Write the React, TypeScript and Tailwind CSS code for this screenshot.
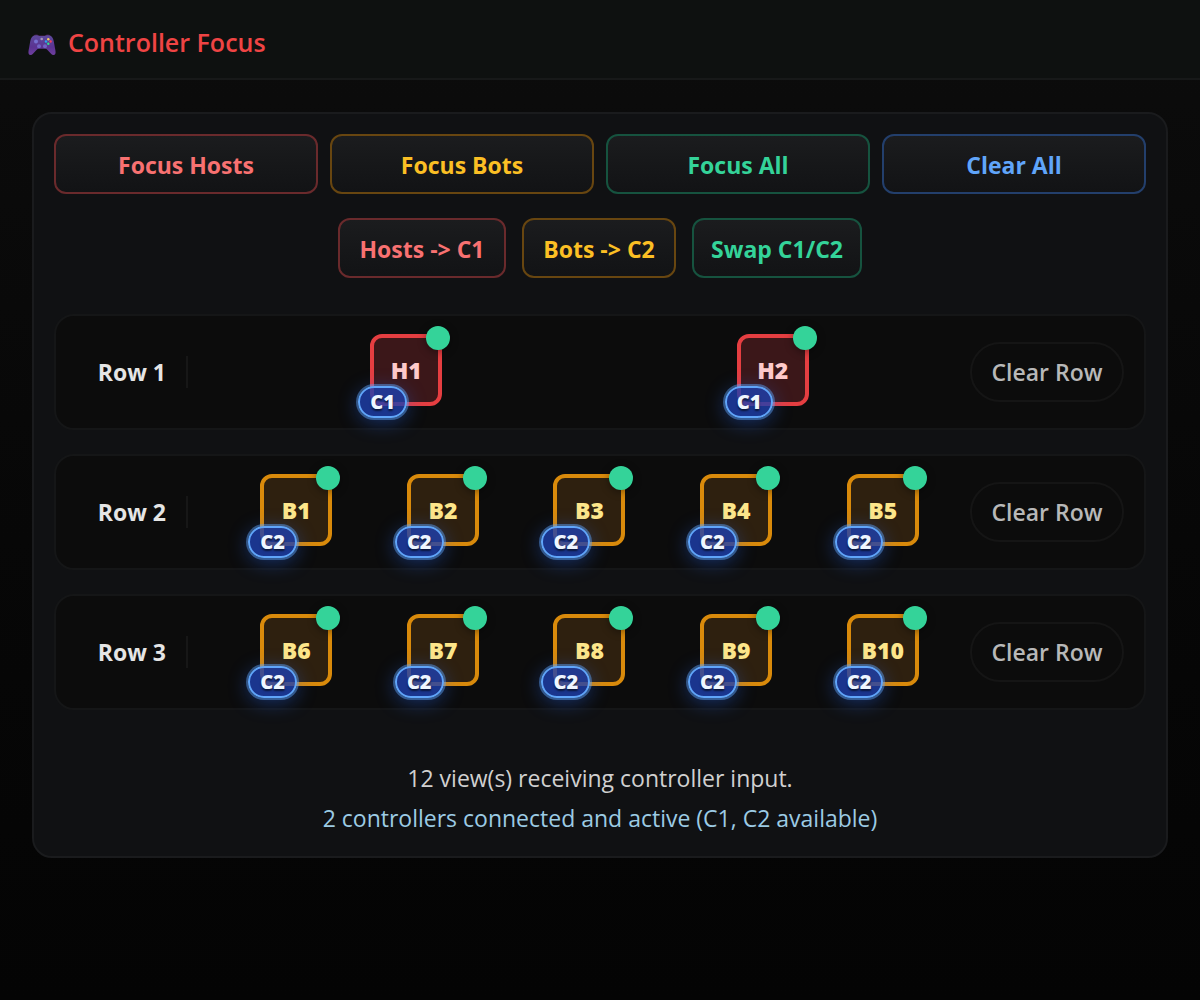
import { clsx } from "clsx";

type Tone = "red" | "amber" | "green" | "blue";

const toneClasses: Record<Tone, string> = {
  red: "border-[#6a2a2c] text-[#f87171]",
  amber: "border-[#684610] text-[#fbbf24]",
  green: "border-[#16533f] text-[#34d399]",
  blue: "border-[#233f6c] text-[#60a5fa]",
};

function ActionButton({ label, tone, className }: { label: string; tone: Tone; className?: string }) {
  return (
    <button
      type="button"
      className={clsx(
        "h-15 rounded-xl border-2 bg-linear-to-b from-[#1b1c1e] to-[#121315] pt-0.5 text-[23px] leading-8 font-bold whitespace-nowrap",
        toneClasses[tone],
        className,
      )}
    >
      {label}
    </button>
  );
}

function ViewTile({ name, controller, host }: { name: string; controller: string; host: boolean }) {
  return (
    <button
      type="button"
      className={clsx(
        "relative size-18 rounded-xl border-4 text-[23px] leading-8 font-extrabold",
        host
          ? "border-[#e53e41] bg-[#3b1719] text-[#fecaca]"
          : "border-[#d98a0b] bg-[#2e200f] text-[#fde68a]",
      )}
    >
      {name}
      <span className="absolute -top-3 -right-3 size-6 rounded-full bg-[#34d399] shadow-[0_2px_8px_rgba(0,0,0,0.4)]" />
      <span className="absolute -bottom-4 -left-4 flex h-8 items-center rounded-full border-2 border-[#60a5fa] bg-[#1e40af]/80 px-[10px] text-[20px] leading-6 font-extrabold text-[#eff6ff] shadow-[0_0_0_2px_rgba(96,165,250,0.45),0_4px_20px_rgba(37,99,235,0.45)] [text-shadow:0_2px_2px_rgba(0,0,0,0.6)]">
        {controller}
      </span>
    </button>
  );
}

function GamepadIcon() {
  return (
    <svg viewBox="0 0 28 22" className="h-[22px] w-7" aria-hidden="true">
      <defs>
        <linearGradient id="pad" x1="0" y1="0" x2="0" y2="1">
          <stop offset="0" stopColor="#5d4a9c" />
          <stop offset="0.6" stopColor="#5b3392" />
          <stop offset="1" stopColor="#6f3f9f" />
        </linearGradient>
      </defs>
      <path d="M5 2.400Q5.600.6 8 .6q2.200 0 3 .8h6Q18 .6 20 .6q2.400 0 3 1.800Z" fill="#46204f" />
      <path
        d="M5.200 2Q6.500 1.300 8.500 1.300q1.500 0 2.500.7h6q1-.7 2.500-.7 2 0 3.300.7Q25 3.200 25.800 7.500L27.500 17q.5 4-2 4-1.400 0-2.700-1.500L19.500 16q-1-1.200-2.500-1.200h-6q-1.500 0-2.500 1.200l-3.300 3.500Q3.900 21 2.500 21 0 21 .5 17L2.200 7.500Q3 3.200 5.200 2Z"
        fill="url(#pad)"
      />
      <circle cx="8" cy="7.500" r="2" fill="#7670d0" />
      <circle cx="11" cy="12.300" r="2" fill="#7164c5" />
      <circle cx="17" cy="12.300" r="2" fill="#7164c5" />
      <circle cx="13.700" cy="5" r="1.300" fill="#a596b6" />
      <circle cx="20.300" cy="5.300" r="1.200" fill="#f5cf63" />
      <circle cx="22.600" cy="7.500" r="1.200" fill="#f2435d" />
      <circle cx="18" cy="7.500" r="1.200" fill="#27a9ee" />
      <circle cx="20.300" cy="9.700" r="1.200" fill="#2fe08c" />
    </svg>
  );
}

const rows = [
  { label: "Row 1", host: true, controller: "C1", views: ["H1", "H2"] },
  { label: "Row 2", host: false, controller: "C2", views: ["B1", "B2", "B3", "B4", "B5"] },
  { label: "Row 3", host: false, controller: "C2", views: ["B6", "B7", "B8", "B9", "B10"] },
];

export default function App() {
  return (
    <div className="min-h-screen bg-linear-to-b from-[#0c0c0c] to-[#040404] font-['Open_Sans','Noto_Sans',sans-serif]">
      <header className="flex items-end gap-3 border-b-2 border-[#171919] bg-[#0e1110] px-7 pt-6 pb-[18px]">
        <div className="pb-1">
          <GamepadIcon />
        </div>
        <h1 className="text-[25px] leading-9 font-semibold text-[#ef4444]">Controller Focus</h1>
      </header>

      <main className="p-8">
        <section className="rounded-[20px] border-2 border-[#1a1b1d] bg-[#101113] p-5 pb-[18px]">
          <div className="grid grid-cols-4 gap-3">
            <ActionButton label="Focus Hosts" tone="red" />
            <ActionButton label="Focus Bots" tone="amber" />
            <ActionButton label="Focus All" tone="green" />
            <ActionButton label="Clear All" tone="blue" />
          </div>

          <div className="mt-6 flex justify-center gap-4">
            <ActionButton label="Hosts -> C1" tone="red" className="w-[168px]" />
            <ActionButton label="Bots -> C2" tone="amber" className="w-[154px]" />
            <ActionButton label="Swap C1/C2" tone="green" className="w-[170px]" />
          </div>

          <div className="mt-9 flex flex-col gap-6">
            {rows.map((row) => (
              <div
                key={row.label}
                className="flex items-center rounded-[20px] border-2 border-[#151617] bg-[#0c0c0c] py-[18px] pr-5"
              >
                <div className="flex h-8 w-[132px] shrink-0 items-center justify-end border-r-2 border-[#171717] pr-5 text-[23px] leading-8 font-bold text-[#e5e5e5]">
                  {row.label}
                </div>
                <div className="mr-[14px] ml-[35px] flex flex-1 pb-1">
                  {row.views.map((view) => (
                    <div key={view} className="flex flex-1 justify-center">
                      <ViewTile name={view} controller={row.controller} host={row.host} />
                    </div>
                  ))}
                </div>
                <button
                  type="button"
                  className="h-15 w-[154px] shrink-0 rounded-full border-2 border-[#151515] text-[23px] leading-8 font-semibold whitespace-nowrap text-[#b8b8b8]"
                >
                  Clear Row
                </button>
              </div>
            ))}
          </div>

          <div className="mt-12 text-center text-[23px] leading-10">
            <p className="text-[#d0d0d0]">12 view(s) receiving controller input.</p>
            <p className="text-[#9ccbe4]">2 controllers connected and active (C1, C2 available)</p>
          </div>
        </section>
      </main>
    </div>
  );
}
